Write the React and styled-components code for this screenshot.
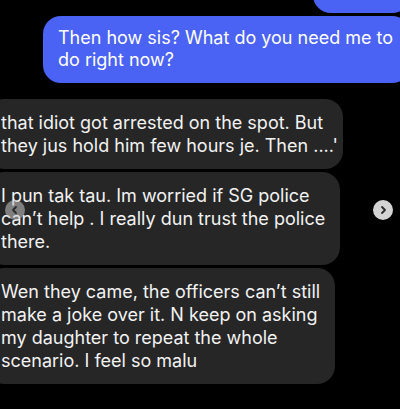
import React from "react";
import styled, { createGlobalStyle } from "styled-components";

const Global = createGlobalStyle`
  html, body { margin: 0; padding: 0; background: #000; }
  #root { width: 400px; height: 409px; }
`;

const Screen = styled.div`
  position: relative;
  width: 400px;
  height: 409px;
  overflow: hidden;
  background: #000;
  display: flex;
  flex-direction: column;
  font-family: Inter, "Noto Sans", "Liberation Sans", sans-serif;
  -webkit-font-smoothing: antialiased;
`;

const Outgoing = styled.div`
  align-self: flex-end;
  box-sizing: border-box;
  width: ${(p) => p.$width}px;
  margin-right: -10px;
  background: #4b63f4;
  color: #fff;
  border-radius: 18px;
  font-size: 18px;
  line-height: 21.5px;
  white-space: nowrap;
`;

const PeekBubble = styled(Outgoing)`
  height: 40px;
  margin-top: -27px;
`;

const MainBubble = styled(Outgoing)`
  margin-top: 3px;
  padding: 11px 0 13px 15px;
`;

const Thread = styled.div`
  display: flex;
  flex-direction: column;
  gap: 3px;
  margin-top: 16px;
`;

const Incoming = styled.div`
  box-sizing: border-box;
  width: ${(p) => p.$right + 14}px;
  margin-left: -14px;
  padding: 12px 0 12px 15px;
  background: #262626;
  color: #f2f2f2;
  border-radius: 18px;
  font-size: 18px;
  line-height: 23px;
  white-space: nowrap;
`;

const Line = styled.div``;

const NavButton = styled.div`
  position: absolute;
  top: 200px;
  left: ${(p) => p.$left}px;
  width: 20px;
  height: 20px;
  border-radius: 50%;
  background: ${(p) => p.$bg};
  display: flex;
  align-items: center;
  justify-content: center;
`;

const Chevron = ({ dir }) => (
  <svg width="10" height="10" viewBox="0 0 10 10">
    <polyline
      points={dir === "left" ? "6,2 3,5 6,8" : "4,2 7,5 4,8"}
      fill="none"
      stroke="#2a2a2a"
      strokeWidth="1.8"
      strokeLinecap="round"
      strokeLinejoin="round"
    />
  </svg>
);

const messages = [
  {
    right: 343,
    lines: ["that idiot got arrested on the spot. But", "they jus hold him few hours je. Then ....'"],
  },
  {
    right: 340,
    lines: ["I pun tak tau. Im worried if SG police", "can\u2019t help . I really dun trust the police", "there."],
  },
  {
    right: 335,
    lines: [
      "Wen they came, the officers can\u2019t still",
      "make a joke over it. N keep on asking",
      "my daughter to repeat the whole",
      "scenario. I feel so malu",
    ],
  },
];

export default function App() {
  return (
    <>
      <Global />
      <Screen>
        <PeekBubble $width={97} />
        <MainBubble $width={367}>
          <Line>Then how sis? What do you need me to</Line>
          <Line>do right now?</Line>
        </MainBubble>
        <Thread>
          {messages.map((m, i) => (
            <Incoming key={i} $right={m.right}>
              {m.lines.map((l, j) => (
                <Line key={j}>{l}</Line>
              ))}
            </Incoming>
          ))}
        </Thread>
        <NavButton $left={5} $bg="rgba(200,200,200,0.55)">
          <Chevron dir="left" />
        </NavButton>
        <NavButton $left={373} $bg="#d4d4d4">
          <Chevron dir="right" />
        </NavButton>
      </Screen>
    </>
  );
}
